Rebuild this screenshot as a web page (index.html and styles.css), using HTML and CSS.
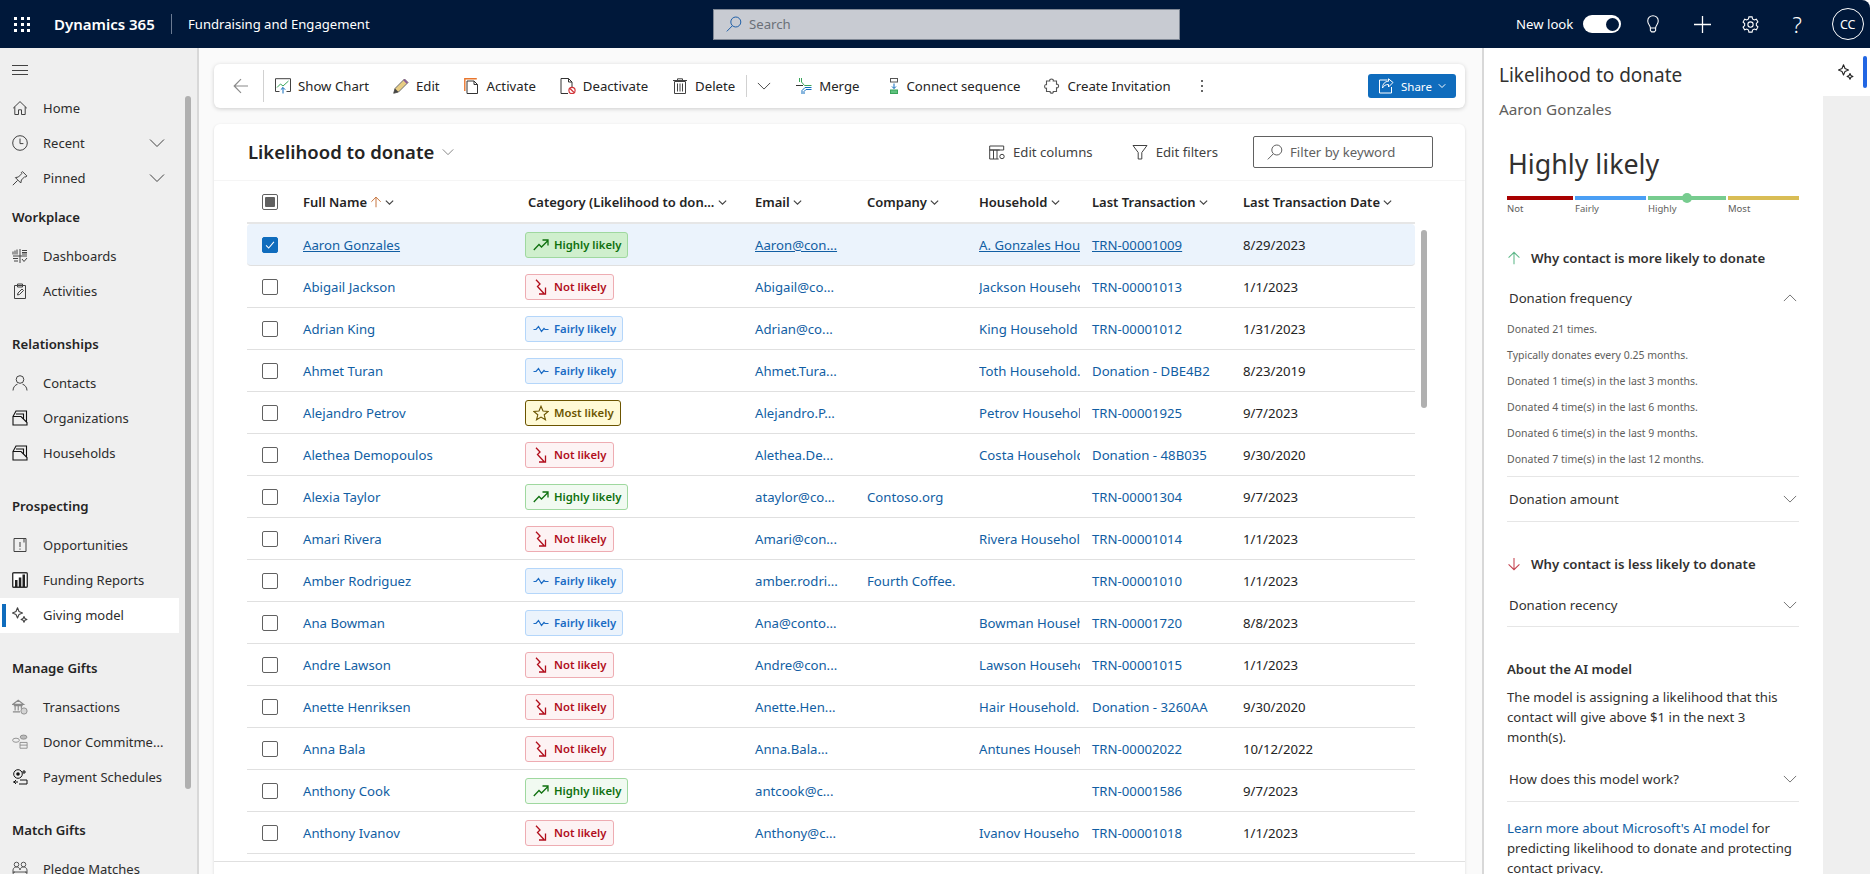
FILE: index.html
```html
<!DOCTYPE html>
<html lang="en">
<head>
    <meta charset="UTF-8" />
    <title>Likelihood to donate - Dynamics 365</title>
    <link rel="stylesheet" href="styles.css">
</head>
<body>
    <svg class="sprite" xmlns="http://www.w3.org/2000/svg">
        <symbol id="i-home" viewBox="0 0 16 16"><path d="M1.2 8.2 8 1.6l6.8 6.6M2.8 6.8v7.7h3.7V9.8h3v4.7h3.7V6.8" fill="none" stroke="currentColor"/></symbol>
        <symbol id="i-clock" viewBox="0 0 16 16"><circle cx="8" cy="8" r="7.3" fill="none" stroke="currentColor"/><path d="M8 3.6v5h3.4" fill="none" stroke="currentColor"/></symbol>
        <symbol id="i-pin" viewBox="0 0 16 16"><path d="M.8 15.2 5.6 10.4M3.4 7.6l3-.6 3.4-3.4-.5-1 1.2-1 4.3 4.3-1 1.2-1-.5-3.4 3.4-.6 3z" fill="none" stroke="currentColor"/></symbol>
        <symbol id="i-chev" viewBox="0 0 16 16"><path d="M1 4.5 8 11.5l7-7" fill="none" stroke="currentColor"/></symbol>
        <symbol id="i-chev2" viewBox="0 0 16 16"><path d="M1.5 4.5 8 11l6.500-6.500" fill="none" stroke="currentColor" stroke-width="2"/></symbol>
        <symbol id="i-chevup" viewBox="0 0 16 16"><path d="M1 11.5 8 4.5l7 7" fill="none" stroke="currentColor"/></symbol>
        <symbol id="i-dash" viewBox="0 0 16 16"><path d="M1 8h14M8 1v14M1 10.5h5M1 3.5v3M3 2.5v4M5 1.5v5M10 2.5h5M10 4.5h5M10 6h5M2 13h4M10 11l2 2.500 3-3.500" fill="none" stroke="currentColor"/></symbol>
        <symbol id="i-clip" viewBox="0 0 16 16"><path d="M2.500 2.500h11v13h-11zM5.500 1h5v3h-5zM5.500 12l.5-2 4-4 1.500 1.500-4 4z" fill="none" stroke="currentColor"/></symbol>
        <symbol id="i-person" viewBox="0 0 16 16"><circle cx="8" cy="4.500" r="3.800" fill="none" stroke="currentColor"/><path d="M1 15.500c0-3.500 2.500-5.700 4.500-6.300M15 15.500c0-3.500-2.500-5.700-4.500-6.300" fill="none" stroke="currentColor"/></symbol>
        <symbol id="i-org" viewBox="0 0 16 16"><path d="M1 6.500h8l6 6v2.500H1zM1 6.500 4 1h10.500v11.500M4 4h7.500v5" fill="none" stroke="#111" stroke-width="1.100"/></symbol>
        <symbol id="i-opp" viewBox="0 0 16 16"><path d="M2 1.500h12v13H2zM8 5v5M8 11.500v1.200M12 1.500v4" fill="none" stroke="currentColor"/></symbol>
        <symbol id="i-report" viewBox="0 0 16 16"><rect x=".7" y=".7" width="14.600" height="14.600" rx="1" fill="#fff" stroke="#333" stroke-width="1.400"/><path d="M3 8h2.500v7H3zM6.800 5.500h2.500V15H6.800zM10.500 2.500H13V15h-2.500z" fill="#222"/></symbol>
        <symbol id="i-spark" viewBox="0 0 16 16"><path d="M5.500.8 7 4.500l3.500 1.500L7 7.500 5.500 11 4 7.500.5 6 4 4.500zM12 9.500l.9 2 2 .9-2 .9-.9 2-.9-2-2-.9 2-.9z" fill="none" stroke="currentColor" stroke-linejoin="round" stroke-width="1.100"/></symbol>
        <symbol id="i-bank" viewBox="0 0 18 18"><path d="M1 6 7 1.500 13 6zM2 7.500h10M3.500 8v5M7 8v5M10.500 8v3M1 14.500h8" fill="none" stroke="#8a8a8a" stroke-width="1.300"/><circle cx="13.500" cy="13.500" r="3.500" fill="#d4d4d4" stroke="#8a8a8a"/></symbol>
        <symbol id="i-coins" viewBox="0 0 18 18"><ellipse cx="4.500" cy="7" rx="3.800" ry="2.300" fill="none" stroke="#8a8a8a"/><ellipse cx="13" cy="3.500" rx="3.800" ry="2.300" fill="#bbb" stroke="#8a8a8a"/><path d="M9 9.500h8v6.500H9zM9 12.500h8" fill="none" stroke="#8a8a8a"/></symbol>
        <symbol id="i-pay" viewBox="0 0 16 16"><circle cx="6" cy="5" r="4.300" fill="none" stroke="#111"/><circle cx="6" cy="5" r="1.800" fill="#111"/><path d="M12 1v4M10 3h4M8 11h7v4H7M1 13h5M4 11l-2 2 2 2" fill="none" stroke="#111"/></symbol>
        <symbol id="i-pledge" viewBox="0 0 16 16"><circle cx="4.500" cy="3.500" r="2.300" fill="none" stroke="#555"/><circle cx="11.500" cy="3.500" r="2.300" fill="none" stroke="#555"/><path d="M1 12V9c0-2 2-3 3.500-3S8 7 8 9c0-2 2-3 3.500-3S15 7 15 9v3M1 11h14M3 15a2 2 0 0 1 0-4M13 15a2 2 0 0 0 0-4" fill="none" stroke="#555"/></symbol>
        <symbol id="i-back" viewBox="0 0 16 16"><path d="M15 8H1.500M8 1.200 1.200 8 8 14.800" fill="none" stroke="#8a8a8a" stroke-width="1.200"/></symbol>
        <symbol id="i-chart" viewBox="0 0 16 16"><path d="M4.500 13.500h-4V.7h15v12.800h-4" fill="none" stroke="#424242"/><path d="M2 9.500l3.500-3.500 2.500 2L13.500 3" fill="none" stroke="#3aa55a"/><path d="M8 15.500V9.500M5.800 11.700 8 9.500l2.200 2.200" fill="none" stroke="#0f6cbd"/></symbol>
        <symbol id="i-pencil" viewBox="0 0 16 16"><path d="M.7 15.300 2 10.500 11.500 1l3.500 3.500L5.500 14z" fill="#e8cd84" stroke="#6d6d6d"/><path d="M11.500 1l3.500 3.500-1.300 1.300L10.200 2.300z" fill="#8a5a9a"/><path d="M.7 15.300 2 10.500l3.500 3.500z" fill="#444"/></symbol>
        <symbol id="i-activate" viewBox="0 0 16 16"><path d="M.8 13V.8h12" fill="none" stroke="#e8762d" stroke-width="1.400"/><path d="M3 15.500V3h7l3.500 3.500v9z" fill="#fff" stroke="#333"/><path d="M10 3v3.500h3.500" fill="none" stroke="#333"/></symbol>
        <symbol id="i-deact" viewBox="0 0 16 16"><path d="M8 15.500H1V.5h7.500L12 4v5M8.500.5V4H12" fill="none" stroke="#333"/><circle cx="12" cy="12.500" r="3.100" fill="#fff" stroke="#d13438" stroke-width="1.200"/><path d="M10 10.500l4 4" stroke="#d13438" stroke-width="1.200"/></symbol>
        <symbol id="i-trash" viewBox="0 0 16 16"><path d="M2.500 3.500h11v12h-11zM1 2.500h14M5.500 2.500V.8h5v1.700M5.500 5.500v8M8 5.500v8M10.500 5.500v8" fill="none" stroke="#424242"/></symbol>
        <symbol id="i-merge" viewBox="0 0 16 16"><path d="M5.500 0v4l3 3.500h7M3.500 0v4" fill="none" stroke="#3aa55a"/><path d="M0 7.500h7" stroke="#333"/><path d="M15.500 9.500H9l-3 3v3.500M15.500 11.500H10l-2 2v2.500" fill="none" stroke="#0f6cbd"/></symbol>
        <symbol id="i-seq" viewBox="0 0 10 16"><rect x="1.500" y=".5" width="7" height="3.500" fill="#fff" stroke="#555"/><path d="M5 5.500v5M3 8.500l2 2 2-2" fill="none" stroke="#0f6cbd"/><rect x="1.500" y="12" width="7" height="3.500" fill="#5fc27e" stroke="#3aa55a"/></symbol>
        <symbol id="i-puzzle" viewBox="0 0 16 16"><path d="M2.500 3h3.200C5 .3 10 .3 9.300 3h3.200v3.200c2.800-.7 2.800 4.300 0 3.600v3.700H9.300c.7 2.200-3.800 2.200-3.200 0H2.500v-3.300C0 11.100 0 5.900 2.500 6.600z" fill="none" stroke="#555" stroke-width="1.100"/></symbol>
        <symbol id="i-share" viewBox="0 0 16 16"><path d="M9.500 2H1.500v13h12V9" fill="none" stroke="#fff"/><path d="M15 4.500 10.500.8v2.500C7 3.300 4.500 6 4.500 10c1.500-2.500 3-3.500 6-3.500v2.500z" fill="none" stroke="#fff"/></symbol>
        <symbol id="i-search" viewBox="0 0 16 16"><circle cx="9.800" cy="6" r="5" fill="none" stroke="currentColor"/><path d="M6.300 9.800.8 15.400" stroke="currentColor"/></symbol>
        <symbol id="i-cols" viewBox="0 0 16 16"><path d="M.7 2h14v4H.7zM.7 6h10M.7 6v9h9M4.500 6v9M8 6v9" fill="none" stroke="#424242"/><circle cx="13" cy="12.500" r="2.200" fill="none" stroke="#424242"/></symbol>
        <symbol id="i-filter" viewBox="0 0 16 16"><path d="M1 1.500h14L9.800 8.500v6.500H6.200V8.500z" fill="none" stroke="#424242"/></symbol>
        <symbol id="i-up" viewBox="0 0 16 16"><path d="M8 15V1.500M1.800 7.700 8 1.500l6.200 6.200" fill="none" stroke="currentColor" stroke-width="1.200"/></symbol>
        <symbol id="i-down" viewBox="0 0 16 16"><path d="M8 1v13.500M1.800 8.300 8 14.500l6.200-6.200" fill="none" stroke="currentColor" stroke-width="1.200"/></symbol>
        <symbol id="i-high" viewBox="0 0 16 16"><path d="M.8 13 6 7.500l2.500 2.500L15 3.500M9.500 3H15v5.500" fill="none" stroke="currentColor" stroke-width="1.300"/></symbol>
        <symbol id="i-not" viewBox="0 0 16 16"><path d="M3 .8 7 5 4.500 7.500l6.500 7M12.500 8.500v6.500H6" fill="none" stroke="currentColor" stroke-width="1.300"/></symbol>
        <symbol id="i-fair" viewBox="0 0 16 16"><path d="M.5 8.500h2.500l2.500-3 3 5 2.500-3 1 1h3.500" fill="none" stroke="currentColor" stroke-width="1.200"/></symbol>
        <symbol id="i-star" viewBox="0 0 16 16"><path d="M8 1.200 10 6l5.200.4-4 3.400 1.300 5L8 12.100l-4.500 2.700 1.300-5-4-3.400L6 6z" fill="none" stroke="currentColor" stroke-width="1.100"/></symbol>
        <symbol id="i-bulb" viewBox="0 0 16 20"><path d="M5 14.500C5 11.500 2 10.500 2 6.500a6 6 0 0 1 12 0c0 4-3 5-3 8zM5 14.500h6v3l-1.500 1.500h-3L5 17.500z" fill="none" stroke="currentColor" stroke-width="1.200"/></symbol>
        <symbol id="i-plus" viewBox="0 0 16 16"><path d="M8 0v16M0 8h16" stroke="currentColor" stroke-width="1.200"/></symbol>
        <symbol id="i-gear" viewBox="0 0 16 16"><circle cx="8" cy="8" r="2.500" fill="none" stroke="currentColor"/><path d="M6.500.8h3l.4 2 1.600.9 2-.7 1.500 2.600-1.500 1.400v1.900l1.500 1.400L13.500 13l-2-.7-1.600.9-.4 2h-3l-.4-2-1.600-.9-2 .7L1 10.400l1.500-1.400V7.100L1 5.700 2.500 3l2 .7 1.600-.9z" fill="none" stroke="currentColor"/></symbol>
    </svg>

    <div class="topbar">
        <div class="waffle"><i></i><i></i><i></i><i></i><i></i><i></i><i></i><i></i><i></i></div>
        <span class="brand">Dynamics 365</span>
        <span class="app-name">Fundraising and Engagement</span>
        <div class="search"><svg class="ic"><use href="#i-search"/></svg><span>Search</span></div>
        <div class="top-right">
            <span class="new-look">New look</span>
            <span class="toggle"><b></b></span>
            <svg class="top-ic bulb"><use href="#i-bulb"/></svg>
            <svg class="top-ic plus"><use href="#i-plus"/></svg>
            <svg class="top-ic gear"><use href="#i-gear"/></svg>
            <span class="help">?</span>
            <span class="avatar">CC</span>
        </div>
    </div>

    <div class="layout">
        <nav class="sidebar">
            <div class="burger"><i></i><i></i><i></i></div>
            <a class="nav-item"><svg class="ic"><use href="#i-home"/></svg>Home</a>
            <a class="nav-item"><svg class="ic"><use href="#i-clock"/></svg>Recent<svg class="ic nav-chev"><use href="#i-chev"/></svg></a>
            <a class="nav-item"><svg class="ic"><use href="#i-pin"/></svg>Pinned<svg class="ic nav-chev"><use href="#i-chev"/></svg></a>

            <div class="nav-title first">Workplace</div>
            <a class="nav-item"><svg class="ic"><use href="#i-dash"/></svg>Dashboards</a>
            <a class="nav-item"><svg class="ic"><use href="#i-clip"/></svg>Activities</a>

            <div class="nav-title">Relationships</div>
            <a class="nav-item"><svg class="ic"><use href="#i-person"/></svg>Contacts</a>
            <a class="nav-item"><svg class="ic"><use href="#i-org"/></svg>Organizations</a>
            <a class="nav-item"><svg class="ic"><use href="#i-org"/></svg>Households</a>

            <div class="nav-title">Prospecting</div>
            <a class="nav-item"><svg class="ic"><use href="#i-opp"/></svg>Opportunities</a>
            <a class="nav-item"><svg class="ic"><use href="#i-report"/></svg>Funding Reports</a>
            <a class="nav-item active"><svg class="ic"><use href="#i-spark"/></svg>Giving model</a>

            <div class="nav-title">Manage Gifts</div>
            <a class="nav-item"><svg class="ic"><use href="#i-bank"/></svg>Transactions</a>
            <a class="nav-item"><svg class="ic"><use href="#i-coins"/></svg>Donor Commitme...</a>
            <a class="nav-item"><svg class="ic"><use href="#i-pay"/></svg>Payment Schedules</a>

            <div class="nav-title">Match Gifts</div>
            <a class="nav-item"><svg class="ic"><use href="#i-pledge"/></svg>Pledge Matches</a>

            <div class="nav-scroll"></div>
        </nav>

        <main class="main">
            <div class="cmdbar">
                <svg class="ic back"><use href="#i-back"/></svg>
                <span class="cmd-sep first"></span>
                <a class="cmd"><svg class="ic"><use href="#i-chart"/></svg>Show Chart</a>
                <a class="cmd"><svg class="ic"><use href="#i-pencil"/></svg>Edit</a>
                <a class="cmd"><svg class="ic"><use href="#i-activate"/></svg>Activate</a>
                <a class="cmd"><svg class="ic"><use href="#i-deact"/></svg>Deactivate</a>
                <a class="cmd"><svg class="ic"><use href="#i-trash"/></svg>Delete</a>
                <span class="cmd-sep"></span>
                <svg class="ic cmd-chev"><use href="#i-chev"/></svg>
                <a class="cmd merge"><svg class="ic"><use href="#i-merge"/></svg>Merge</a>
                <a class="cmd seq"><svg class="ic"><use href="#i-seq"/></svg>Connect sequence</a>
                <a class="cmd invite"><svg class="ic"><use href="#i-puzzle"/></svg>Create Invitation</a>
                <span class="dots"><i></i><i></i><i></i></span>
                <a class="share"><svg class="ic"><use href="#i-share"/></svg>Share<svg class="share-chev"><use href="#i-chev2"/></svg></a>
            </div>

            <section class="card">
                <div class="card-head">
                    <h1>Likelihood to donate</h1>
                    <svg class="title-chev"><use href="#i-chev"/></svg>
                    <a class="tool cols"><svg class="ic"><use href="#i-cols"/></svg>Edit columns</a>
                    <a class="tool filters"><svg class="ic"><use href="#i-filter"/></svg>Edit filters</a>
                    <div class="filter-box"><svg class="ic"><use href="#i-search"/></svg>Filter by keyword</div>
                </div>

                <div class="table-wrap">
                    <table class="grid">
                        <colgroup>
                            <col class="c-check"><col class="c-name"><col class="c-cat"><col class="c-email">
                            <col class="c-comp"><col class="c-house"><col class="c-trans"><col class="c-date">
                        </colgroup>
                        <thead>
                            <tr>
                                <th class="check"><span class="box partial"></span></th>
                                <th>Full Name <svg class="sort"><use href="#i-up"/></svg><svg class="th-chev"><use href="#i-chev2"/></svg></th>
                                <th class="th-cat">Category (Likelihood to don... <svg class="th-chev"><use href="#i-chev2"/></svg></th>
                                <th>Email <svg class="th-chev"><use href="#i-chev2"/></svg></th>
                                <th>Company <svg class="th-chev"><use href="#i-chev2"/></svg></th>
                                <th>Household <svg class="th-chev"><use href="#i-chev2"/></svg></th>
                                <th>Last Transaction <svg class="th-chev"><use href="#i-chev2"/></svg></th>
                                <th>Last Transaction Date <svg class="th-chev"><use href="#i-chev2"/></svg></th>
                            </tr>
                        </thead>
                        <tbody>
                            <tr class="selected">
                                <td class="check"><span class="box on"><svg viewBox="0 0 16 16"><path d="M3.500 8.500 6.500 11.500 12.500 4.500" fill="none" stroke="#fff" stroke-width="1.200"/></svg></span></td>
                                <td><a>Aaron Gonzales</a></td>
                                <td class="cat"><span class="tag high strong"><svg class="ic"><use href="#i-high"/></svg>Highly likely</span></td>
                                <td><a>Aaron@con...</a></td><td></td>
                                <td class="clip"><a>A. Gonzales Household</a></td>
                                <td><a>TRN-00001009</a></td><td>8/29/2023</td>
                            </tr>
                            <tr>
                                <td class="check"><span class="box"></span></td><td><a>Abigail Jackson</a></td>
                                <td class="cat"><span class="tag not"><svg class="ic"><use href="#i-not"/></svg>Not likely</span></td>
                                <td><a>Abigail@co...</a></td><td></td><td class="clip"><a>Jackson Household</a></td>
                                <td><a>TRN-00001013</a></td><td>1/1/2023</td>
                            </tr>
                            <tr>
                                <td class="check"><span class="box"></span></td><td><a>Adrian King</a></td>
                                <td class="cat"><span class="tag fair"><svg class="ic"><use href="#i-fair"/></svg>Fairly likely</span></td>
                                <td><a>Adrian@co...</a></td><td></td><td class="clip"><a>King Household</a></td>
                                <td><a>TRN-00001012</a></td><td>1/31/2023</td>
                            </tr>
                            <tr>
                                <td class="check"><span class="box"></span></td><td><a>Ahmet Turan</a></td>
                                <td class="cat"><span class="tag fair"><svg class="ic"><use href="#i-fair"/></svg>Fairly likely</span></td>
                                <td><a>Ahmet.Tura...</a></td><td></td><td class="clip"><a>Toth Household.</a></td>
                                <td><a>Donation - DBE4B2</a></td><td>8/23/2019</td>
                            </tr>
                            <tr>
                                <td class="check"><span class="box"></span></td><td><a>Alejandro Petrov</a></td>
                                <td class="cat"><span class="tag most"><svg class="ic"><use href="#i-star"/></svg>Most likely</span></td>
                                <td><a>Alejandro.P...</a></td><td></td><td class="clip"><a>Petrov Household</a></td>
                                <td><a>TRN-00001925</a></td><td>9/7/2023</td>
                            </tr>
                            <tr>
                                <td class="check"><span class="box"></span></td><td><a>Alethea Demopoulos</a></td>
                                <td class="cat"><span class="tag not"><svg class="ic"><use href="#i-not"/></svg>Not likely</span></td>
                                <td><a>Alethea.De...</a></td><td></td><td class="clip"><a>Costa Household</a></td>
                                <td><a>Donation - 48B035</a></td><td>9/30/2020</td>
                            </tr>
                            <tr>
                                <td class="check"><span class="box"></span></td><td><a>Alexia Taylor</a></td>
                                <td class="cat"><span class="tag high"><svg class="ic"><use href="#i-high"/></svg>Highly likely</span></td>
                                <td><a>ataylor@co...</a></td><td class="clip"><a>Contoso.org</a></td><td></td>
                                <td><a>TRN-00001304</a></td><td>9/7/2023</td>
                            </tr>
                            <tr>
                                <td class="check"><span class="box"></span></td><td><a>Amari Rivera</a></td>
                                <td class="cat"><span class="tag not"><svg class="ic"><use href="#i-not"/></svg>Not likely</span></td>
                                <td><a>Amari@con...</a></td><td></td><td class="clip"><a>Rivera Household</a></td>
                                <td><a>TRN-00001014</a></td><td>1/1/2023</td>
                            </tr>
                            <tr>
                                <td class="check"><span class="box"></span></td><td><a>Amber Rodriguez</a></td>
                                <td class="cat"><span class="tag fair"><svg class="ic"><use href="#i-fair"/></svg>Fairly likely</span></td>
                                <td><a>amber.rodri...</a></td><td class="clip"><a>Fourth Coffee.</a></td><td></td>
                                <td><a>TRN-00001010</a></td><td>1/1/2023</td>
                            </tr>
                            <tr>
                                <td class="check"><span class="box"></span></td><td><a>Ana Bowman</a></td>
                                <td class="cat"><span class="tag fair"><svg class="ic"><use href="#i-fair"/></svg>Fairly likely</span></td>
                                <td><a>Ana@conto...</a></td><td></td><td class="clip"><a>Bowman Household</a></td>
                                <td><a>TRN-00001720</a></td><td>8/8/2023</td>
                            </tr>
                            <tr>
                                <td class="check"><span class="box"></span></td><td><a>Andre Lawson</a></td>
                                <td class="cat"><span class="tag not"><svg class="ic"><use href="#i-not"/></svg>Not likely</span></td>
                                <td><a>Andre@con...</a></td><td></td><td class="clip"><a>Lawson Household</a></td>
                                <td><a>TRN-00001015</a></td><td>1/1/2023</td>
                            </tr>
                            <tr>
                                <td class="check"><span class="box"></span></td><td><a>Anette Henriksen</a></td>
                                <td class="cat"><span class="tag not"><svg class="ic"><use href="#i-not"/></svg>Not likely</span></td>
                                <td><a>Anette.Hen...</a></td><td></td><td class="clip"><a>Hair Household.</a></td>
                                <td><a>Donation - 3260AA</a></td><td>9/30/2020</td>
                            </tr>
                            <tr>
                                <td class="check"><span class="box"></span></td><td><a>Anna Bala</a></td>
                                <td class="cat"><span class="tag not"><svg class="ic"><use href="#i-not"/></svg>Not likely</span></td>
                                <td><a>Anna.Bala...</a></td><td></td><td class="clip"><a>Antunes Household</a></td>
                                <td><a>TRN-00002022</a></td><td>10/12/2022</td>
                            </tr>
                            <tr>
                                <td class="check"><span class="box"></span></td><td><a>Anthony Cook</a></td>
                                <td class="cat"><span class="tag high"><svg class="ic"><use href="#i-high"/></svg>Highly likely</span></td>
                                <td><a>antcook@c...</a></td><td></td><td></td>
                                <td><a>TRN-00001586</a></td><td>9/7/2023</td>
                            </tr>
                            <tr>
                                <td class="check"><span class="box"></span></td><td><a>Anthony Ivanov</a></td>
                                <td class="cat"><span class="tag not"><svg class="ic"><use href="#i-not"/></svg>Not likely</span></td>
                                <td><a>Anthony@c...</a></td><td></td><td class="clip"><a>Ivanov Household</a></td>
                                <td><a>TRN-00001018</a></td><td>1/1/2023</td>
                            </tr>
                        </tbody>
                    </table>
                    <div class="grid-scroll"></div>
                </div>
                <div class="card-foot"></div>
            </section>
        </main>

        <aside class="panel">
            <h2 class="panel-title">Likelihood to donate</h2>
            <div class="panel-name">Aaron Gonzales</div>
            <div class="panel-body">
                <div class="big">Highly likely</div>
                <div class="meter">
                    <span class="seg s-not"></span><span class="seg s-fair"></span>
                    <span class="seg s-high"><i class="dot"></i></span><span class="seg s-most"></span>
                </div>
                <div class="meter-labels">
                    <span class="s-not">Not</span><span class="s-fair">Fairly</span><span class="s-high">Highly</span><span class="s-most">Most</span>
                </div>

                <div class="why more"><svg class="ic"><use href="#i-up"/></svg>Why contact is more likely to donate</div>
                <div class="acc-head open"><span>Donation frequency</span><svg class="ic"><use href="#i-chevup"/></svg></div>
                <ul class="acc-list">
                    <li>Donated 21 times.</li>
                    <li>Typically donates every 0.25 months.</li>
                    <li>Donated 1 time(s) in the last 3 months.</li>
                    <li>Donated 4 time(s) in the last 6 months.</li>
                    <li>Donated 6 time(s) in the last 9 months.</li>
                    <li>Donated 7 time(s) in the last 12 months.</li>
                </ul>
                <div class="acc-head"><span>Donation amount</span><svg class="ic"><use href="#i-chev"/></svg></div>

                <div class="why less"><svg class="ic"><use href="#i-down"/></svg>Why contact is less likely to donate</div>
                <div class="acc-head recency"><span>Donation recency</span><svg class="ic"><use href="#i-chev"/></svg></div>

                <h3 class="about">About the AI model</h3>
                <p class="about-text">The model is assigning a likelihood that this contact will give above $1 in the next 3 month(s).</p>
                <div class="acc-head how"><span>How does this model work?</span><svg class="ic"><use href="#i-chev"/></svg></div>
                <p class="learn"><a>Learn more about Microsoft's AI model</a> for predicting likelihood to donate and protecting contact privacy.</p>
            </div>
        </aside>

        <div class="tabs">
            <div class="tab-top"><svg class="ic"><use href="#i-spark"/></svg><span class="tab-mark"></span></div>
        </div>
    </div>
</body>
</html>
```

FILE: styles.css
```css
* {
    margin: 0;
    padding: 0;
    box-sizing: border-box;
}

html, body {
    height: 874px;
    overflow: hidden;
}

body {
    font-family: "Noto Sans", "Open Sans", sans-serif;
    font-size: 13.2px;
    color: #242424;
    background: #fff;
    padding-right: 6px;
}

a {
    color: inherit;
    text-decoration: none;
}

.sprite {
    position: absolute;
    width: 0;
    height: 0;
}

.ic {
    width: 16px;
    height: 16px;
    flex-shrink: 0;
    display: block;
}

/* top bar */
.topbar {
    height: 48px;
    background: #00183a;
    color: #fff;
    display: flex;
    align-items: center;
    border-top-right-radius: 8px;
}

.waffle {
    width: 16px;
    margin-left: 14px;
    display: grid;
    grid-template-columns: repeat(3, 3px);
    justify-content: space-between;
    row-gap: 3px;
}

.waffle i {
    width: 3px;
    height: 3px;
    background: #fff;
}

.brand {
    margin-left: 24px;
    width: 117px;
    font-size: 15px;
    font-weight: 600;
}

.app-name {
    width: 542px;
    padding-left: 16px;
    border-left: 1px solid #6a7a92;
    line-height: 20px;
    font-size: 13.1px;
}

.search {
    width: 467px;
    height: 31px;
    background: #c8cbd2;
    border: 1px solid #7f8794;
    display: flex;
    align-items: center;
    gap: 7px;
    padding-left: 12px;
    color: #6b7078;
}

.search .ic {
    color: #1f5fa8;
}

.top-right {
    margin-left: auto;
    display: flex;
    align-items: center;
    height: 48px;
    width: 354px;
}

.new-look {
    margin-right: 10px;
}

.toggle {
    width: 38px;
    height: 18px;
    border-radius: 9px;
    background: #fff;
    display: flex;
    align-items: center;
    justify-content: flex-end;
    padding-right: 2px;
}

.toggle b {
    width: 13px;
    height: 13px;
    border-radius: 50%;
    background: #00183a;
}

.top-ic {
    display: block;
    flex-shrink: 0;
}

.bulb {
    width: 14px;
    height: 18px;
    margin-left: 25px;
}

.plus {
    width: 17px;
    height: 17px;
    margin-left: 34px;
}

.gear {
    width: 17px;
    height: 17px;
    margin-left: 31px;
}

.help {
    font-size: 22px;
    font-weight: 300;
    margin-left: 33px;
}

.avatar {
    width: 32px;
    height: 32px;
    margin-left: 30px;
    border: 1px solid #fff;
    border-radius: 50%;
    display: flex;
    align-items: center;
    justify-content: center;
    font-size: 12.5px;
}

/* page layout */
.layout {
    height: 826px;
    display: flex;
}

.sidebar {
    width: 199px;
    flex-shrink: 0;
    background: #efefef;
    border-right: 2px solid #d8d8d8;
    position: relative;
    overflow: hidden;
}

.burger {
    height: 42.5px;
    padding: 17px 0 0 12px;
}

.burger i {
    display: block;
    width: 16px;
    height: 1px;
    background: #424242;
    margin-bottom: 3.5px;
}

.nav-item {
    height: 35px;
    width: 179px;
    display: flex;
    align-items: center;
    gap: 15px;
    padding: 0 14px 0 12px;
    color: #2c2c2c;
    position: relative;
    font-size: 13px;
    white-space: nowrap;
}

.nav-item .ic {
    color: #424242;
}

.nav-item .nav-chev {
    margin-left: auto;
}

.nav-item.active {
    background: #fff;
}

.nav-item.active::before {
    content: "";
    position: absolute;
    left: 2px;
    top: 6px;
    bottom: 6px;
    width: 4px;
    background: #0f6cbd;
}

.nav-title {
    height: 43px;
    margin-top: 14px;
    padding-left: 12px;
    display: flex;
    align-items: center;
    font-weight: 600;
}

.nav-title.first {
    margin-top: 0;
}

.nav-scroll {
    position: absolute;
    left: 185px;
    top: 48px;
    width: 6px;
    height: 693px;
    border-radius: 3px;
    background: #b0b0b0;
}

.main {
    width: 1283px;
    flex-shrink: 0;
    background: #fafafa;
    padding: 16px 17px 0 15px;
    overflow: hidden;
}

.cmdbar {
    height: 44px;
    background: #fff;
    border-radius: 6px;
    box-shadow: 0 1px 4px rgba(0, 0, 0, 0.18);
    display: flex;
    align-items: center;
    padding-left: 19px;
}

.back {
    margin-right: 14px;
}

.cmd-sep {
    width: 1px;
    height: 22px;
    background: #d1d1d1;
    margin: 0 10px 0 -1px;
}

.cmd-sep.first {
    height: 32px;
    margin: 0 11px 0 0;
}

.cmd {
    display: flex;
    align-items: center;
    gap: 7px;
    margin-right: 24px;
    white-space: nowrap;
}

.cmd:nth-of-type(5) {
    margin-right: 12px;
}

.cmd-chev {
    width: 14px;
    height: 14px;
    margin: 0 25px 0 0;
    color: #333;
}

.cmd.seq {
    margin-left: 6px;
}

.cmd.seq .ic {
    width: 10px;
}

.cmd.invite .ic {
    width: 16px;
}

.dots {
    margin-left: 6px;
    display: flex;
    flex-direction: column;
    gap: 3px;
}

.dots i {
    width: 2px;
    height: 2px;
    border-radius: 50%;
    background: #333;
}

.share {
    margin-left: auto;
    margin-right: 9px;
    width: 88px;
    height: 24px;
    background: #0f6cbd;
    border-radius: 3px;
    color: #fff;
    font-size: 11.5px;
    display: flex;
    align-items: center;
    padding-left: 10px;
    gap: 7px;
}

.share-chev {
    width: 8px;
    height: 8px;
    margin-left: -1px;
}

.card {
    margin-top: 16px;
    height: 780px;
    background: #fff;
    border-radius: 6px;
    box-shadow: 0 1px 3px rgba(0, 0, 0, 0.14);
}

.card-head {
    height: 57px;
    border-bottom: 1px solid #f5f5f5;
    display: flex;
    align-items: center;
    padding: 0 32px 1px 34px;
}

.card-head h1 {
    font-size: 18.5px;
    font-weight: 600;
}

.title-chev {
    width: 12px;
    height: 12px;
    margin-left: 8px;
    color: #616161;
    flex-shrink: 0;
}

.tool {
    display: flex;
    align-items: center;
    gap: 8px;
    color: #424242;
}

.tool.cols {
    margin-left: auto;
    margin-right: 39px;
}

.tool.filters {
    margin-right: 35px;
}

.filter-box {
    width: 180px;
    height: 32px;
    border: 1px solid #616161;
    border-radius: 2px;
    display: flex;
    align-items: center;
    gap: 7px;
    padding-left: 13px;
    color: #616161;
}

.table-wrap {
    position: relative;
    padding-left: 33px;
}

.grid {
    width: 1168px;
    table-layout: fixed;
    border-collapse: separate;
    border-spacing: 0;
}

.c-check { width: 47px; }
.c-name { width: 225px; }
.c-cat { width: 227px; }
.c-email { width: 112px; }
.c-comp { width: 112px; }
.c-house { width: 113px; }
.c-trans { width: 151px; }
.c-date { width: 181px; }

.grid th {
    height: 43px;
    padding: 0 0 0 9px;
    text-align: left;
    font-size: 13px;
    font-weight: 600;
    white-space: nowrap;
    border-bottom: 2px solid #e6e6e6;
}

.grid td {
    height: 42px;
    padding: 0 0 0 9px;
    border-bottom: 1px solid #e0e0e0;
    white-space: nowrap;
    overflow: hidden;
    color: #242424;
}

.grid td a {
    color: #115ea3;
}

.grid td.cat {
    padding-left: 6px;
}

.grid td.clip {
    padding-right: 3px;
}

.grid td.clip a {
    display: block;
    overflow: hidden;
}

.grid .check {
    padding: 0 0 0 15px;
}

.selected td {
    background: #ebf3fc;
}

.selected td a {
    text-decoration: underline;
}

.selected td:first-child {
    border-top-left-radius: 4px;
    border-bottom-left-radius: 4px;
}

.selected td:last-child {
    border-top-right-radius: 4px;
    border-bottom-right-radius: 4px;
}

.box {
    display: flex;
    align-items: center;
    justify-content: center;
    width: 16px;
    height: 16px;
    border: 1px solid #616161;
    border-radius: 2px;
    background: #fff;
}

.box.on {
    background: #0f6cbd;
    border-color: #0f6cbd;
}

.box.on svg {
    width: 14px;
    height: 14px;
}

.box.partial::after {
    content: "";
    width: 10px;
    height: 10px;
    border-radius: 1px;
    background: #616161;
}

.sort {
    width: 12px;
    height: 12px;
    margin-right: 3px;
    color: #c2682b;
    vertical-align: -1px;
}

.th-chev {
    width: 9px;
    height: 9px;
    color: #424242;
}

.tag {
    display: inline-flex;
    align-items: center;
    gap: 5px;
    height: 26px;
    padding: 0 6px 0 7px;
    border: 1px solid;
    border-radius: 3px;
    font-size: 11.3px;
    font-weight: 600;
    vertical-align: middle;
}

.tag.high {
    background: #f1faf1;
    border-color: #9fd89f;
    color: #0e700e;
}

.tag.high.strong {
    background: #cfefcd;
}

.tag.not {
    background: #fdf3f4;
    border-color: #eeacb2;
    color: #b10e1c;
}

.tag.fair {
    background: #ebf3fc;
    border-color: #b4d6fa;
    color: #1a6bc4;
}

.tag.most {
    background: #fffad6;
    border-color: #6b5400;
    color: #6b5400;
}

.grid-scroll {
    position: absolute;
    left: 1207px;
    top: 49px;
    width: 6px;
    height: 178px;
    border-radius: 3px;
    background: #b0b0b0;
}

.card-foot {
    margin-top: 7px;
    border-top: 1px solid #e0e0e0;
}

/* right panel */
.panel {
    width: 341px;
    flex-shrink: 0;
    background: #fff;
    border-left: 2px solid #d8d8d8;
    overflow: hidden;
}

.panel-title {
    height: 54px;
    line-height: 54px;
    padding-left: 15px;
    font-size: 19px;
    font-weight: 400;
    color: #323130;
}

.panel-name {
    height: 16px;
    line-height: 14px;
    padding-left: 15px;
    font-size: 15.3px;
    color: #605e5c;
}

.panel-body {
    padding: 25px 24px 0 23px;
}

.big {
    height: 40px;
    line-height: 42px;
    font-size: 26.8px;
    padding-left: 1px;
    color: #323130;
}

.meter {
    margin-top: 13px;
    height: 4px;
    display: flex;
    gap: 2px;
}

.seg {
    display: block;
    height: 4px;
    position: relative;
}

.meter .s-not { width: 66px; background: #a80000; }
.meter .s-fair { width: 71px; background: #4a9ff5; }
.meter .s-high { width: 78px; background: #77cc8f; }
.meter .s-most { width: 71px; background: #d9bd55; }

.dot {
    position: absolute;
    left: 34px;
    top: -3px;
    width: 10px;
    height: 10px;
    border-radius: 50%;
    background: #77cc8f;
}

.meter-labels {
    margin-top: 3px;
    height: 12px;
    line-height: 12px;
    display: flex;
    gap: 2px;
    font-size: 9.5px;
    color: #605e5c;
}

.meter-labels .s-not { width: 66px; }
.meter-labels .s-fair { width: 71px; }
.meter-labels .s-high { width: 78px; }

.why {
    margin-top: 33px;
    height: 20px;
    display: flex;
    align-items: center;
    gap: 10px;
    font-weight: 600;
    color: #323130;
}

.why .ic {
    width: 14px;
    height: 14px;
}

.why.more .ic {
    color: #5fb88a;
}

.why.less {
    margin-top: 32px;
}

.why.less .ic {
    color: #c4434f;
}

.acc-head {
    height: 45px;
    display: flex;
    align-items: center;
    justify-content: space-between;
    padding: 0 2px;
    color: #323130;
    border-bottom: 1px solid #e6e6e6;
}

.acc-head .ic {
    width: 14px;
    height: 14px;
    color: #616161;
}

.acc-head.open {
    height: 36px;
    margin-top: 12px;
    border-bottom: 0;
}

.acc-list {
    list-style: none;
    padding-bottom: 4px;
    border-bottom: 1px solid #e6e6e6;
    font-size: 10.5px;
    line-height: 26px;
    color: #605e5c;
}

.acc-head.recency {
    height: 44px;
    margin-top: 9px;
}

.about {
    margin-top: 32px;
    height: 20px;
    line-height: 20px;
    font-size: 13.2px;
    font-weight: 600;
    color: #323130;
}

.about-text {
    margin-top: 8px;
    line-height: 20px;
    color: #323130;
}

.acc-head.how {
    margin-top: 10px;
}

.learn {
    margin-top: 16px;
    line-height: 20px;
    color: #323130;
}

.learn a {
    color: #115ea3;
}

.tabs {
    flex: 1;
    background: #efefef;
}

.tab-top {
    height: 48px;
    background: #fff;
    display: flex;
    align-items: center;
    padding-left: 15px;
    position: relative;
}

.tab-mark {
    position: absolute;
    left: 40px;
    top: 8px;
    width: 4px;
    height: 32px;
    border-radius: 2px;
    background: #2266e3;
}
```
